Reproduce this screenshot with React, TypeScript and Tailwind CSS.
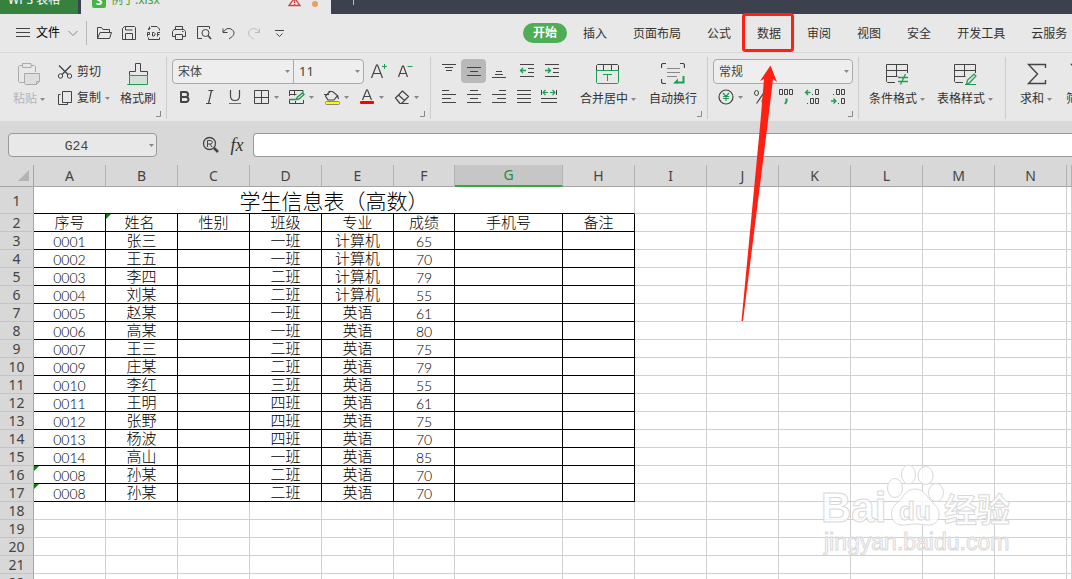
import React from "react";
import clsx from "clsx";

type IconProps = { children: React.ReactNode; size?: number; className?: string };

// Line icons are drawn on a grid of whole pixels
const Icon = ({ children, size = 16, className }: IconProps) => (
  <svg
    width={size}
    height={size}
    viewBox={`0 0 ${size} ${size}`}
    fill="none"
    stroke="#444"
    className={clsx("shrink-0", className)}
    aria-hidden="true"
  >
    {children}
  </svg>
);

const GREEN = "#1f9d55";

const Caret = ({ className }: { className?: string }) => (
  <svg width="5" height="3" viewBox="0 0 5 3" fill="#888" className={clsx("shrink-0", className)}>
    <path d="M0 0h5L2.5 3z" />
  </svg>
);

const quickActions = [
  {
    label: "打开",
    icon: (
      <path d="M1.5 13.5v-11h4l1.5 2h6.5v2.5M1.5 13.5l2.5-6h11.5l-2 6z" strokeLinejoin="round" />
    ),
  },
  {
    label: "保存",
    icon: (
      <path d="M1.5 3.5l2-2h10l1 1v12h-13zM4.5 14.5v-6h7v6M4.5 1.5v3.5h7" strokeLinejoin="round" />
    ),
  },
  {
    label: "输出为PDF",
    icon: (
      <>
        <path d="M2.5 5V3.5h2m-1-2V4.5M5 1.5h6l2.5 2.5v1.5M2.5 12.5v2h11v-2" />
        <path d="M1.5 11.5v-4h2v2h-2M6.5 7.5h1.5l1 1v1.5l-1 1h-1.5zM11.5 11.5v-4h2.5M11.5 9.5h2" />
      </>
    ),
  },
  {
    label: "打印",
    icon: (
      <path
        d="M4.5 4.5v-3h7v3M4 11.5H1.5v-5l1.5-2h10l1.5 2v5H12M4.5 9.5h7v5h-7zM11 6.5h1.5"
        strokeLinejoin="round"
      />
    ),
  },
  {
    label: "打印预览",
    icon: (
      <>
        <path d="M6 13.5H1.5v-12h12V4" />
        <circle cx="9.5" cy="8" r="3.5" />
        <path d="M12 10.5l3 3.5" strokeWidth="1.5" />
      </>
    ),
  },
  {
    label: "撤销",
    icon: <path d="M2 3.5v4h4.5M2.5 7c2-3.5 5-4 7.5-3 4 2 4 6 0 8.5l-2 1.5" />,
  },
  {
    label: "恢复",
    icon: <path d="M13.5 3.5v4H9M13 7C11 3.5 8 3 5.5 4c-4 2-4 6 0 8.5l2 1.5" stroke="#bbb" />,
  },
  { label: "自定义", icon: <path d="M4 5.5h9M5.5 8.5l3 3 3-3" /> },
];

const tabs = ["插入", "页面布局", "公式", "数据", "审阅", "视图", "安全", "开发工具", "云服务"];

// Box round the tab and the arrow that points at it
const Marker = () => (
  <svg
    width="52"
    height="310"
    viewBox="0 0 52 310"
    className="absolute -left-0.5 -top-px pointer-events-none overflow-visible"
  >
    <rect x="1.5" y="1.5" width="49" height="36" rx="2" fill="none" stroke="#ff2014" strokeWidth="3" />
    <path d="M28.5 52.5L35 69l-4-3-5 42L1 308H-.5L18.5 108 22 66l-4 2z" fill="#ff2014" />
  </svg>
);

const Launcher = () => (
  <svg
    width="6"
    height="6"
    viewBox="0 0 6 6"
    fill="none"
    stroke="#888"
    className="absolute right-[5px] bottom-0.5"
  >
    <path d="M5.5 0v5.5H1" />
  </svg>
);

type GroupProps = { children: React.ReactNode; className: string; launcher?: boolean };

const Group = ({ children, className, launcher }: GroupProps) => (
  <div
    className={clsx(
      "relative flex shrink-0 h-[62px] mt-1 pt-px border-r border-[#cdcdcd]",
      className
    )}
  >
    {children}
    {launcher && <Launcher />}
  </div>
);

type BigButtonProps = {
  label: string;
  icon: React.ReactNode;
  className: string;
  caret?: boolean;
};

const BigButton = ({ label, icon, className, caret }: BigButtonProps) => (
  <button className={clsx("flex flex-col shrink-0 h-[54px]", className)}>
    <span className="flex h-7 w-full items-end justify-center">
      <Icon size={24}>{icon}</Icon>
    </span>
    <span className="flex h-[26px] w-full items-center justify-center gap-[3px] whitespace-nowrap">
      {label}
      {caret && <Caret />}
    </span>
  </button>
);

type ToolProps = {
  label: string;
  children: React.ReactNode;
  caret?: boolean;
  active?: boolean;
  className?: string;
};

const Tool = ({ label, children, caret, active, className = "w-[25px]" }: ToolProps) => (
  <button
    aria-label={label}
    className={clsx(
      "flex shrink-0 h-6 items-center",
      caret ? "gap-1" : "justify-center",
      active && "rounded bg-[#b9b9b9]",
      className
    )}
  >
    {children}
    {caret && <Caret />}
  </button>
);

type PickerProps = { label: string; value: string; className: string };

const Picker = ({ label, value, className }: PickerProps) => (
  <div className={clsx("relative flex h-full items-center", className)}>
    <select
      aria-label={label}
      defaultValue={value}
      className="appearance-none w-full h-full pl-[5px] bg-transparent outline-none text-[#444]"
    >
      <option>{value}</option>
    </select>
    <Caret className="absolute right-[3px] pointer-events-none" />
  </div>
);

const Ribbon = () => (
  <div className="flex h-[69px] border-t border-[#d8d8d8] overflow-hidden">
    <Group className="pl-2 pr-1" launcher>
      <BigButton
        label="粘贴"
        caret
        className="w-[42px] text-[#b5b5b5]"
        icon={
          <g stroke="#aaa">
            <path d="M8 20.5H2.5l-1-1v-15l1-1H5M14 3.5h3.5l1 1V10M5.5 1.5h8.5v4H5.5z" strokeLinejoin="round" />
            <path
              d="M7.5 11.5h15v8l-3 3h-11l-1-1zM22.5 19.5h-3v3"
              fill="#dedede"
              strokeLinejoin="round"
            />
          </g>
        }
      />
      <div className="flex flex-col ml-[6px] w-14">
        <button className="flex h-[27px] items-center gap-1 pl-px">
          <Icon>
            <circle cx="3.5" cy="12" r="2.2" />
            <circle cx="12.5" cy="12" r="2.2" />
            <path d="M2 1.5l9 9M14 1.5l-9 9" strokeWidth="1.3" />
          </Icon>
          剪切
        </button>
        <button className="flex h-[26px] items-center gap-1 pl-px">
          <Icon>
            <path d="M5.5 1.5h9v11h-9zM3.5 4.5h-2v10h9v-2" strokeLinejoin="round" />
          </Icon>
          复制
          <Caret />
        </button>
      </div>
      <BigButton
        label="格式刷"
        className="ml-0.5 w-12"
        icon={
          <>
            <path d="M3.5 13V9.5h6v-8h5v8h7V13" strokeLinejoin="round" />
            <path d="M3.5 13.5h18v9H1.5h2z" fill="#d3e0d8" stroke={GREEN} />
          </>
        }
      />
    </Group>

    <Group className="pl-[5px] pr-px" launcher>
      <div className="flex flex-col">
        <div className="flex h-[27px] items-center">
          <div className="flex h-[25px] w-48 border border-[#aaa] rounded bg-[#eee]">
            <Picker label="字体" value="宋体" className="w-[121px] border-r border-[#aaa]" />
            <Picker label="字号" value="11" className="flex-1 text-[13px]" />
          </div>
          <Tool label="增大字号" className="ml-[6px] w-[18px]">
            <Icon size={18}>
              <path d="M1.5 15L6.5 2h1l5 13M3.5 10.5h7" strokeWidth="1.2" />
              <path d="M14.5 1v5M12 3.5h5" stroke={GREEN} />
            </Icon>
          </Tool>
          <Tool label="减小字号" className="ml-2 w-[18px]">
            <Icon size={18}>
              <path d="M2.5 14L6.5 3h1l4 11M4 10.5h6" strokeWidth="1.2" />
              <path d="M11.5 3.5h5" stroke={GREEN} />
            </Icon>
          </Tool>
        </div>
        <div className="flex h-6 items-center">
          <Tool label="加粗">
            <Icon>
              <path
                d="M4 3v10h5a2.5 2.5 0 0 0 0-5H4h4.5a2.5 2.5 0 0 0 0-5z"
                strokeWidth="2"
                strokeLinejoin="round"
              />
            </Icon>
          </Tool>
          <Tool label="倾斜">
            <Icon>
              <path d="M6.5 1.5h5M4 14.5h5M9.5 1.5l-3 13" strokeWidth="1.2" />
            </Icon>
          </Tool>
          <Tool label="下划线">
            <Icon>
              <path d="M3.5 1v6c0 6 9 6 9 0V1" strokeWidth="1.2" />
              <path d="M2 14.5h12" stroke={GREEN} />
            </Icon>
          </Tool>
          <Tool label="边框" caret className="ml-[7px] w-[35px]">
            <Icon>
              <path d="M.5 1.5h14v13H.5zM7.5 1.5v13M.5 8.5h14" />
            </Icon>
          </Tool>
          <Tool label="绘图边框" caret className="w-[35px]">
            <Icon>
              <path d="M.5 7V1.5h13.5V4M5.5 1.5v5M.5 5.5h7M.5 11v3.5h14V11M6.5 12v2" />
              <path d="M0 10.5h7l1.5-2.5 5-4 1.5 1.5-5 4.5-3 .5" stroke={GREEN} strokeWidth="1.4" />
            </Icon>
          </Tool>
          <Tool label="填充颜色" caret className="w-[35px]">
            <Icon>
              <path d="M4.5 2.5h4l5 4-3.5 4.5h-6l-2.5-4 5-5M0 5.5h5M13.5 6.5l1 3.5" strokeWidth="1.2" />
              <rect x="1.5" y="12.5" width="14" height="3" rx="1" fill="#ff0" stroke="#888" />
            </Icon>
          </Tool>
          <Tool label="字体颜色" caret className="w-[35px]">
            <Icon>
              <path d="M3.5 11L7.5 1h1l4 10M5 7.5h6" strokeWidth="1.2" />
              <rect x="1" y="12" width="14" height="3" rx="1" fill="red" stroke="none" />
            </Icon>
          </Tool>
          <Tool label="清除" caret className="w-[35px]">
            <Icon>
              <path
                d="M1.5 9l7-7 6 5.5-7 7H6zM4.5 6l6 5.5M7.5 14.5h7"
                strokeWidth="1.2"
                strokeLinejoin="round"
              />
            </Icon>
          </Tool>
        </div>
      </div>
    </Group>

    <Group className="pl-[5px] pr-[6px]" launcher>
      <div className="flex flex-col w-32">
        <div className="flex h-[26px] items-center">
          <Tool label="顶端对齐">
            <Icon>
              <path d="M1 1.5h14M4 4.5h8M5 7.5h6" />
            </Icon>
          </Tool>
          <Tool label="垂直居中" active>
            <Icon>
              <path d="M1 4.5h14M4 8.5h8M1 12.5h14" />
            </Icon>
          </Tool>
          <Tool label="底端对齐">
            <Icon>
              <path d="M5 8.5h6M4 11.5h8M1 14.5h14" />
            </Icon>
          </Tool>
          <Tool label="减少缩进量" className="ml-[3px] w-[25px]">
            <Icon>
              <path d="M1 1.5h14M9 5.5h6M9 9.5h6M1 13.5h14" />
              <path d="M1 7.5h6M4 5L1.5 7.5 4 10" stroke={GREEN} strokeWidth="1.3" />
            </Icon>
          </Tool>
          <Tool label="增加缩进量">
            <Icon>
              <path d="M1 1.5h14M9 5.5h6M9 9.5h6M1 13.5h14" />
              <path d="M1 7.5h6M4 5l2.5 2.5L4 10" stroke={GREEN} strokeWidth="1.3" />
            </Icon>
          </Tool>
        </div>
        <div className="flex h-[26px] items-center">
          <Tool label="左对齐">
            <Icon>
              <path d="M1 1.5h7M1 5.5h14M1 9.5h9M1 13.5h14" />
            </Icon>
          </Tool>
          <Tool label="水平居中">
            <Icon>
              <path d="M4 1.5h8M1 5.5h14M4 9.5h8M1 13.5h14" />
            </Icon>
          </Tool>
          <Tool label="右对齐">
            <Icon>
              <path d="M8 1.5h7M1 5.5h14M6 9.5h9M1 13.5h14" />
            </Icon>
          </Tool>
          <Tool label="两端对齐">
            <Icon>
              <path d="M1 1.5h14M1 5.5h14M1 9.5h14M1 13.5h14" />
            </Icon>
          </Tool>
          <Tool label="分散对齐">
            <Icon>
              <path d="M.5 1v5M15.5 1v5M0 9.5h16M0 13.5h16" />
              <path
                d="M2 3.5h5M4.5 1L2 3.5 4.5 6M9 3.5h5M11.5 1L14 3.5 11.5 6"
                stroke={GREEN}
                strokeWidth="1.2"
              />
            </Icon>
          </Tool>
        </div>
      </div>
      <BigButton
        label="合并居中"
        caret
        className="ml-3 w-16"
        icon={
          <>
            <path d="M.5 9V3.5l1-1h20l1 1V9M7.5 3v5M15.5 3v5" />
            <path d="M.5 8.5h22v12l-1 1h-20l-1-1zM7 12.5h9M11.5 12.5V19" stroke={GREEN} />
          </>
        }
      />
      <BigButton
        label="自动换行"
        className="ml-[5px] w-14"
        icon={
          <>
            <path d="M.5 6V2.5l1-1H5M19 1.5h3.5l1 1V6M.5 17v3.5l1 1H5" strokeWidth="1.2" />
            <path d="M6 6.5h13M6 10.5h13M6 14.5h10" stroke="#888" />
            <path d="M22.5 14v6.5H15" stroke={GREEN} strokeWidth="2" />
            <path d="M12 21.5l5-5v5z" fill={GREEN} stroke="none" />
          </>
        }
      />
    </Group>

    <Group className="px-[5px]" launcher>
      <div className="flex flex-col w-[140px]">
        <div className="flex h-[27px] items-center">
          <div className="flex h-[25px] w-full border border-[#aaa] rounded bg-[#eee]">
            <Picker label="数字格式" value="常规" className="w-full" />
          </div>
        </div>
        <div className="flex h-6 items-center pl-[5px]">
          <Tool label="货币样式" caret className="w-[29px]">
            <Icon>
              <circle cx="8" cy="8" r="7" strokeWidth="1.2" />
              <path d="M5 4l3 3.5L11 4M8 7.5V12M5 7.5h6M5 9.5h6" stroke={GREEN} strokeWidth="1.2" />
            </Icon>
          </Tool>
          <Tool label="百分比样式" className="w-[26px]">
            <Icon>
              <path d="M13.5 1.5l-9 13" strokeWidth="1.2" />
              <ellipse cx="4.5" cy="4" rx="2" ry="2.5" />
              <ellipse cx="12" cy="12" rx="2" ry="2.5" />
            </Icon>
          </Tool>
          <Tool label="千位分隔样式" className="w-[26px]">
            <Icon>
              <path d="M1.5 .5h3v5h-3zM6.5 .5h3v5h-3zM11.5 .5h3v5h-3z" strokeLinejoin="round" />
              <path d="M8.5 9.5v3l-1.5 2.5" stroke={GREEN} strokeWidth="2" />
            </Icon>
          </Tool>
          <Tool label="增加小数位数" className="w-[26px]">
            <Icon>
              <path d="M11.5 .5h3v5h-3zM6.5 9.5h3v5h-3zM11.5 9.5h3v5h-3zM8 5.5h1M3 14.5h1" />
              <path d="M1.5 3.5h5M4 1L1.5 3.5 4 6" stroke={GREEN} strokeWidth="1.3" />
            </Icon>
          </Tool>
          <Tool label="减少小数位数" className="w-[26px]">
            <Icon>
              <path d="M6.5 .5h3v5h-3zM11.5 .5h3v5h-3zM11.5 9.5h3v5h-3zM3 5.5h1M8 14.5h1" />
              <path d="M1 12h5M3.5 9.5L6 12l-2.5 2.5" stroke={GREEN} strokeWidth="1.3" />
            </Icon>
          </Tool>
        </div>
      </div>
    </Group>

    <Group className="pl-[6px] pr-2">
      <BigButton
        label="条件格式"
        caret
        className="w-16"
        icon={
          <>
            <path d="M10 20.5H2.5l-1-1v-17h21V11M1.5 8.5h21M11.5 2.5v12M1.5 14.5h11" />
            <path d="M13 15.5h10M13 19.5h10M20.5 12l-5 10.5" stroke={GREEN} strokeWidth="1.3" />
          </>
        }
      />
      <BigButton
        label="表格样式"
        caret
        className="ml-1 w-16"
        icon={
          <>
            <path d="M10 20.5H2.5l-1-1v-17h21V11M1.5 8.5h21M11.5 2.5v12M1.5 14.5h11" />
            <path
              d="M13.5 22l1-4 6.5-6 2 2-6.5 7zM12 22.5h11"
              fill="#d3e0d8"
              stroke={GREEN}
              strokeWidth="1.2"
            />
          </>
        }
      />
    </Group>

    <div className="flex shrink-0 mt-1 pt-px pl-[6px]">
      <BigButton
        label="求和"
        caret
        className="w-12"
        icon={<path d="M21.5 6V2.5h-17l9 9.5-9 9.5h17V18" strokeWidth="1.4" />}
      />
      <BigButton
        label="筛选"
        caret
        className="w-11"
        icon={<path d="M1.5 2.5h20l-8 9v8l-4 3v-11z" strokeWidth="1.3" />}
      />
    </div>
  </div>
);

const columns = [
  { name: "A", width: "w-[72px]" },
  { name: "B", width: "w-[72px]" },
  { name: "C", width: "w-[72px]" },
  { name: "D", width: "w-[72px]" },
  { name: "E", width: "w-[72px]" },
  { name: "F", width: "w-[61px]" },
  { name: "G", width: "w-[108px]" },
  { name: "H", width: "w-[72px]" },
  { name: "I", width: "w-[72px]" },
  { name: "J", width: "w-[72px]" },
  { name: "K", width: "w-[72px]" },
  { name: "L", width: "w-[72px]" },
  { name: "M", width: "w-[72px]" },
  { name: "N", width: "w-[72px]" },
  { name: "", width: "" },
];

const rows = [
  ["序号", "姓名\u00a0", "性别", "班级", "专业", "成绩", "手机号", "备注"],
  ["0001", "张三", "", "一班", "计算机", "65", "", ""],
  ["0002", "王五", "", "一班", "计算机", "70", "", ""],
  ["0003", "李四", "", "二班", "计算机", "79", "", ""],
  ["0004", "刘某", "", "二班", "计算机", "55", "", ""],
  ["0005", "赵某", "", "一班", "英语", "61", "", ""],
  ["0006", "高某", "", "一班", "英语", "80", "", ""],
  ["0007", "王三", "", "二班", "英语", "75", "", ""],
  ["0009", "庄某", "", "二班", "英语", "79", "", ""],
  ["0010", "李红", "", "三班", "英语", "55", "", ""],
  ["0011", "王明", "", "四班", "英语", "61", "", ""],
  ["0012", "张野", "", "四班", "英语", "75", "", ""],
  ["0013", "杨波", "", "四班", "英语", "70", "", ""],
  ["0014", "高山", "", "一班", "英语", "85", "", ""],
  ["0008", "孙某", "", "二班", "英语", "70", "", ""],
  ["0008", "孙某", "", "二班", "英语", "70", "", ""],
];

// Cells that carry the green error corner
const flagged = ["B2", "A16", "A17"];

const blankRows = [18, 19, 20, 21, 22];
const blankColumns = columns.slice(8);

const RowHeader = ({ n }: { n: number }) => (
  <th
    scope="row"
    className="p-0 bg-[#d8d8d8] border-r border-b border-r-[#a6a6a6] border-b-[#c4c4c4] font-normal text-sm leading-[17px] text-[#444]"
  >
    {n}
  </th>
);

const Blank = () => <td className="p-0 border-r border-b border-[#d0d0d0]"></td>;

const Sheet = () => (
  <table className="w-full table-fixed border-separate border-spacing-0 text-center bg-white">
    <thead>
      <tr className="h-[22px] bg-[#d8d8d8] text-[#444] text-sm leading-5">
        <th className="w-[34px] p-0 border-r border-b border-[#a6a6a6]">
          <svg width="11" height="11" viewBox="0 0 11 11" fill="#b4b4b4" className="ml-auto mr-1">
            <path d="M11 0v11H0z" />
          </svg>
        </th>
        {columns.map((col) => (
          <th
            key={col.name}
            scope="col"
            className={clsx(
              "p-0 font-normal border-r border-r-[#b2b2b2]",
              col.width,
              col.name === "G"
                ? "bg-[#c6c6c6] text-[#2c8a3c] border-b-2 border-b-[#3da53d]"
                : "border-b border-b-[#a6a6a6]"
            )}
          >
            {col.name}
          </th>
        ))}
      </tr>
    </thead>
    <tbody>
      <tr className="h-[27px]">
        <RowHeader n={1} />
        <td
          colSpan={8}
          className="p-0 border-r border-b border-r-[#d0d0d0] border-b-black text-[21px] leading-6 font-light text-black font-['Noto_Sans_CJK_SC',sans-serif]"
        >
          学生信息表（高数）
        </td>
        {blankColumns.map((col) => (
          <Blank key={col.name} />
        ))}
      </tr>
      {rows.map((cells, i) => (
        <tr key={i} className="h-[18px]">
          <RowHeader n={i + 2} />
          {cells.map((text, j) => (
            <td
              key={j}
              className={clsx(
                "relative p-0 pt-0.5 border-r border-b border-black text-black font-light",
                /^\d/.test(text)
                  ? "text-sm leading-[15px] font-['Lato',sans-serif]"
                  : "text-[15px] leading-[15px] font-['Liberation_Serif','Noto_Sans_CJK_SC',serif]"
              )}
            >
              {flagged.includes(columns[j].name + (i + 2)) && (
                <svg width="5" height="5" viewBox="0 0 5 5" fill="#107c10" className="absolute left-0 top-0">
                  <path d="M0 0h5L0 5z" />
                </svg>
              )}
              {text}
            </td>
          ))}
          {blankColumns.map((col) => (
            <Blank key={col.name} />
          ))}
        </tr>
      ))}
      {blankRows.map((n) => (
        <tr key={n} className="h-[18px]">
          <RowHeader n={n} />
          {columns.map((col) => (
            <Blank key={col.name} />
          ))}
        </tr>
      ))}
    </tbody>
  </table>
);

const Watermark = () => (
  <svg
    width="200"
    height="96"
    viewBox="0 0 200 96"
    fill="#fff"
    fillOpacity="0.8"
    stroke="#d9d9d9"
    className="absolute left-[820px] top-[462px] pointer-events-none font-['Liberation_Sans','Noto_Sans_CJK_SC',sans-serif]"
  >
    <ellipse cx="75" cy="26" rx="7.5" ry="9.5" />
    <ellipse cx="88.5" cy="12.5" rx="7" ry="9.5" />
    <ellipse cx="105.5" cy="13.5" rx="7.5" ry="9" />
    <ellipse cx="116" cy="30.5" rx="7.5" ry="9" />
    <path d="M95 27c-10 0-12 10-19 15-8 7-5 21 6 21 6 0 8-1 13-1s8 1 14 1c11 0 13-14 6-20-8-7-10-16-20-16z" />
    <text x="1" y="60" fontSize="42" fontWeight="700">
      Bai
    </text>
    <text x="79" y="58" fontSize="26" fontWeight="700">
      du
    </text>
    <text x="124" y="60" fontSize="33" fontWeight="700">
      经验
    </text>
    <text x="4" y="88" fontSize="23">
      jingyan.baidu.com
    </text>
  </svg>
);

const App = () => {
  return (
    <div className="relative flex flex-col h-screen overflow-hidden bg-[#e8e8e8] text-xs text-[#333] font-['Noto_Sans','Noto_Sans_CJK_SC',sans-serif]">
      <header className="flex shrink-0 h-[14px] bg-[#3d404d] overflow-hidden">
        <button className="flex w-[78px] h-full items-end pl-2 pb-1 bg-[#37813f] text-white text-xs leading-5">
          WPS 表格
        </button>
        <div className="flex ml-[3px] w-[250px] h-full items-end pl-[11px] pr-[13px] pb-1 bg-[#e8e8e8]">
          <span className="flex size-[14px] mb-0.5 items-center justify-center rounded-xs bg-[#45b545] text-xs font-bold leading-[14px] text-white">
            S
          </span>
          <span className="ml-[5px] text-xs leading-5 text-[#3f9f46]">例子.xlsx</span>
          <span className="flex ml-auto items-center gap-[11px]">
            <svg width="13" height="13" viewBox="0 0 13 13" fill="none" stroke="#d04545" strokeWidth="1.3">
              <path d="M6.5 1L12 8.5H1zM6.5 3v3M6.5 7v1" />
            </svg>
            <span className="size-[6px] rounded-full bg-[#e8a05c]"></span>
          </span>
        </div>
        <button aria-label="新建" className="flex w-11 h-full items-end justify-center pb-2 text-[#bbb]">
          <svg width="11" height="11" viewBox="0 0 11 11" stroke="currentColor">
            <path d="M5.5 0v10M0 4.5h11" />
          </svg>
        </button>
      </header>

      <nav className="relative z-10 flex shrink-0 h-[38px] items-center">
        <button className="flex shrink-0 w-[71px] ml-[15px] items-center">
          <Icon>
            <path d="M1 3.5h14M1 7.5h14M1 11.5h14" />
          </Icon>
          <span className="ml-[5px] text-black">文件</span>
          <Icon size={10} className="ml-2">
            <path d="M.5 3L5 7.5 9.5 3" stroke="#888" />
          </Icon>
        </button>
        <div className="flex shrink-0 w-[434px] h-6 items-center pl-2 border-l border-[#b8b8b8]">
          {quickActions.map((action) => (
            <button
              key={action.label}
              aria-label={action.label}
              className="flex w-[25px] h-6 items-center"
            >
              <Icon className="ml-px">{action.icon}</Icon>
            </button>
          ))}
        </div>
        <button className="shrink-0 h-5 mx-[3px] px-[10px] rounded-full bg-[#4fae55] font-bold text-white">
          开始
        </button>
        {tabs.map((tab) => (
          <button key={tab} className="relative shrink-0 h-full pt-0.5 px-[13px] whitespace-nowrap">
            {tab}
            {tab === "数据" && <Marker />}
          </button>
        ))}
      </nav>

      <Ribbon />

      <div className="flex shrink-0 h-11 items-center pl-2 pt-1 bg-[#d8d8d8]">
        <div className="relative flex shrink-0 w-[149px] h-6 items-center">
          <input
            aria-label="名称框"
            defaultValue="G24"
            className="w-full h-full pr-3 pt-0.5 rounded border border-[#999] bg-[#e8e8e8] text-center text-[13px] text-[#444] font-['Liberation_Mono',monospace]"
          />
          <Caret className="absolute right-[3px]" />
        </div>
        <button aria-label="浏览公式结果" className="ml-[45px]">
          <Icon size={18}>
            <circle cx="7.5" cy="7.5" r="6" strokeWidth="1.3" />
            <path d="M5.5 11V4.5h3a1.7 1.7 0 0 1 0 3.5h-3M8 8l2 3" />
            <path d="M12 12l4 4" strokeWidth="2.5" />
          </Icon>
        </button>
        <button className="ml-2 w-[18px] text-lg leading-5 italic font-['Liberation_Serif',serif]">
          fx
        </button>
        <input
          aria-label="编辑栏"
          className="ml-[7px] flex-1 h-6 rounded-l border border-r-0 border-[#999] bg-white"
        />
      </div>

      <main className="flex-1 min-h-0 overflow-hidden bg-white">
        <Sheet />
      </main>

      <Watermark />
    </div>
  );
};

export default App;
